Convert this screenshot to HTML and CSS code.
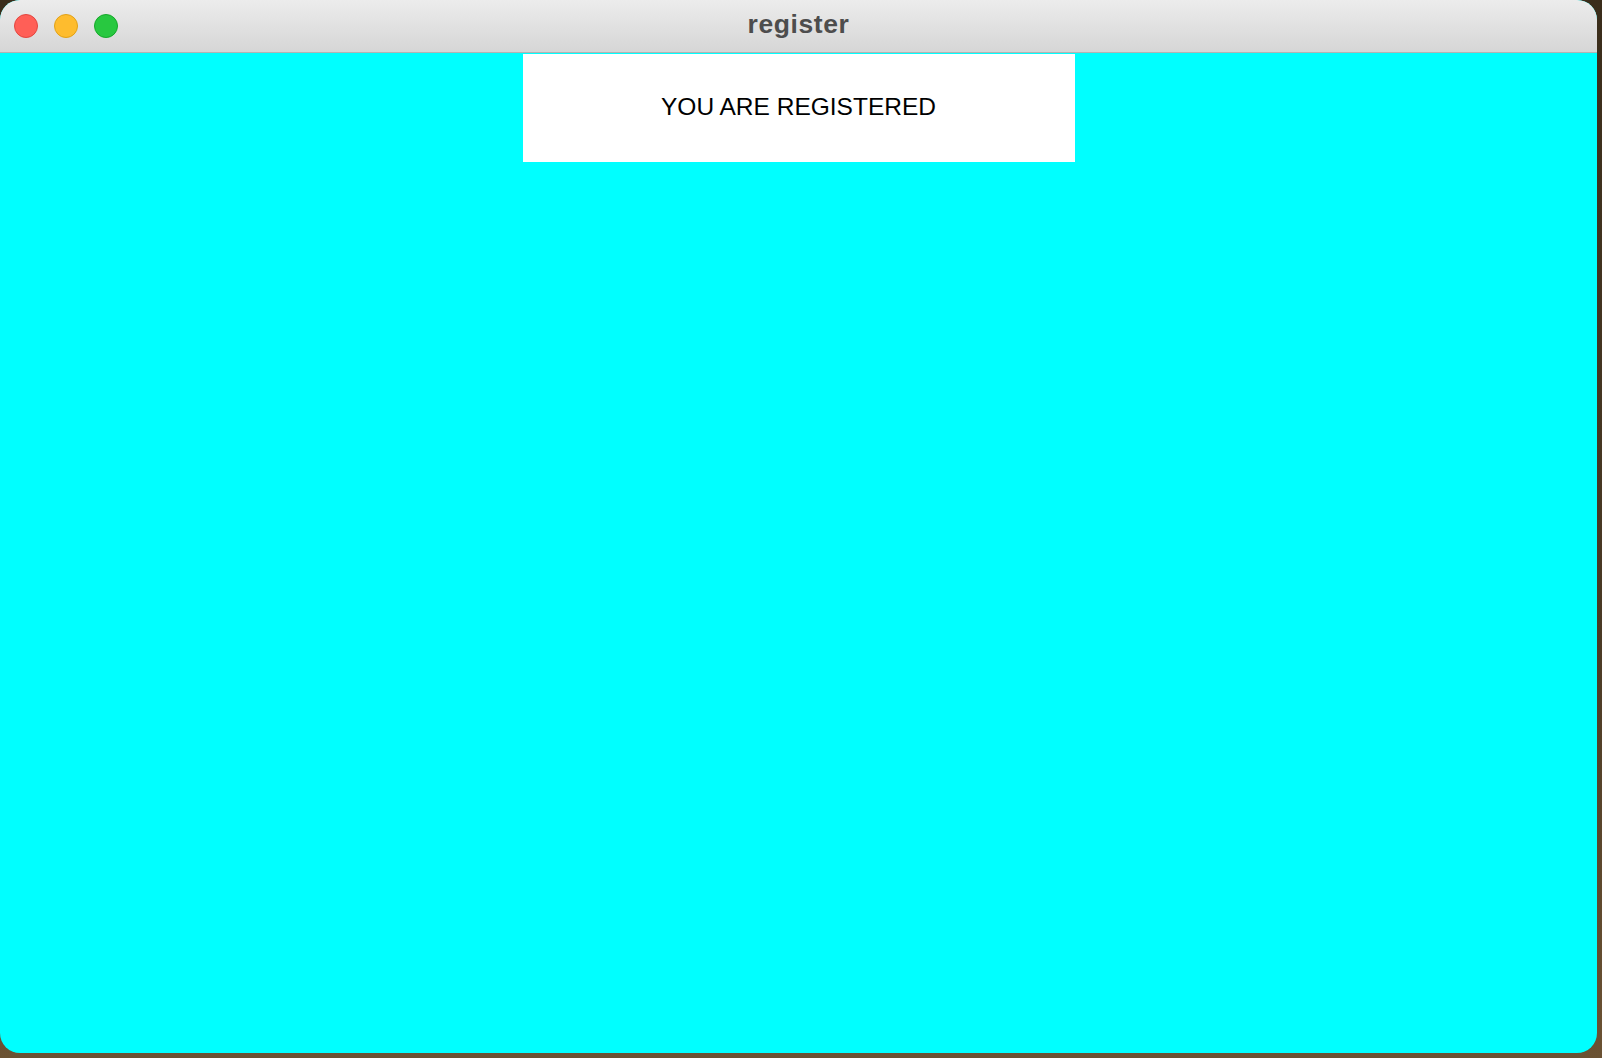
FILE: index.html
```html
<!DOCTYPE html>
<html>
<head>
<meta charset="utf-8">
<title>register</title>
<link rel="stylesheet" href="styles.css">
</head>
<body>
<div class="window">
  <div class="titlebar">
    <div class="lights">
      <span class="light red"></span>
      <span class="light yellow"></span>
      <span class="light green"></span>
    </div>
    <div class="title">register</div>
  </div>
  <div class="content">
    <div class="message">YOU ARE REGISTERED</div>
  </div>
</div>
</body>
</html>
```
FILE: styles.css
```css
html, body {
  margin: 0;
  padding: 0;
  width: 1602px;
  height: 1058px;
  overflow: hidden;
}
body {
  background: linear-gradient(180deg, #3a2d1b 0%, #4a3a25 60%, #6b5233 100%);
}
.window {
  width: 1597px;
  height: 1053px;
  border-radius: 20px;
  overflow: hidden;
  display: flex;
  flex-direction: column;
  background: #00ffff;
}
.titlebar {
  position: relative;
  height: 52px;
  flex: 0 0 52px;
  background: linear-gradient(180deg, #ececec 0%, #d6d6d6 100%);
  border-bottom: 1px solid #b3b3b3;
  display: flex;
  align-items: center;
  justify-content: center;
}
.lights {
  position: absolute;
  left: 14px;
  top: 14px;
  display: flex;
  gap: 16px;
}
.light {
  width: 22px;
  height: 22px;
  border-radius: 50%;
  box-sizing: content-box;
}
.red { background: #ff5f57; border: 1px solid #e2463f; }
.yellow { background: #febc2e; border: 1px solid #e1a116; }
.green { background: #28c840; border: 1px solid #16a82a; }
.title {
  font-family: "Liberation Sans", Arial, sans-serif;
  font-weight: bold;
  font-size: 26.5px;
  letter-spacing: 0.6px;
  color: #4d4d4d;
  margin-top: -3px;
}
.content {
  flex: 1;
  display: flex;
  flex-direction: column;
  align-items: center;
  padding-top: 1px;
}
.message {
  width: 552px;
  height: 108px;
  background: #ffffff;
  display: flex;
  align-items: center;
  justify-content: center;
  font-family: "Liberation Sans", Arial, sans-serif;
  font-size: 24.5px;
  color: #000000;
  padding-bottom: 2px;
  box-sizing: border-box;
}
```
